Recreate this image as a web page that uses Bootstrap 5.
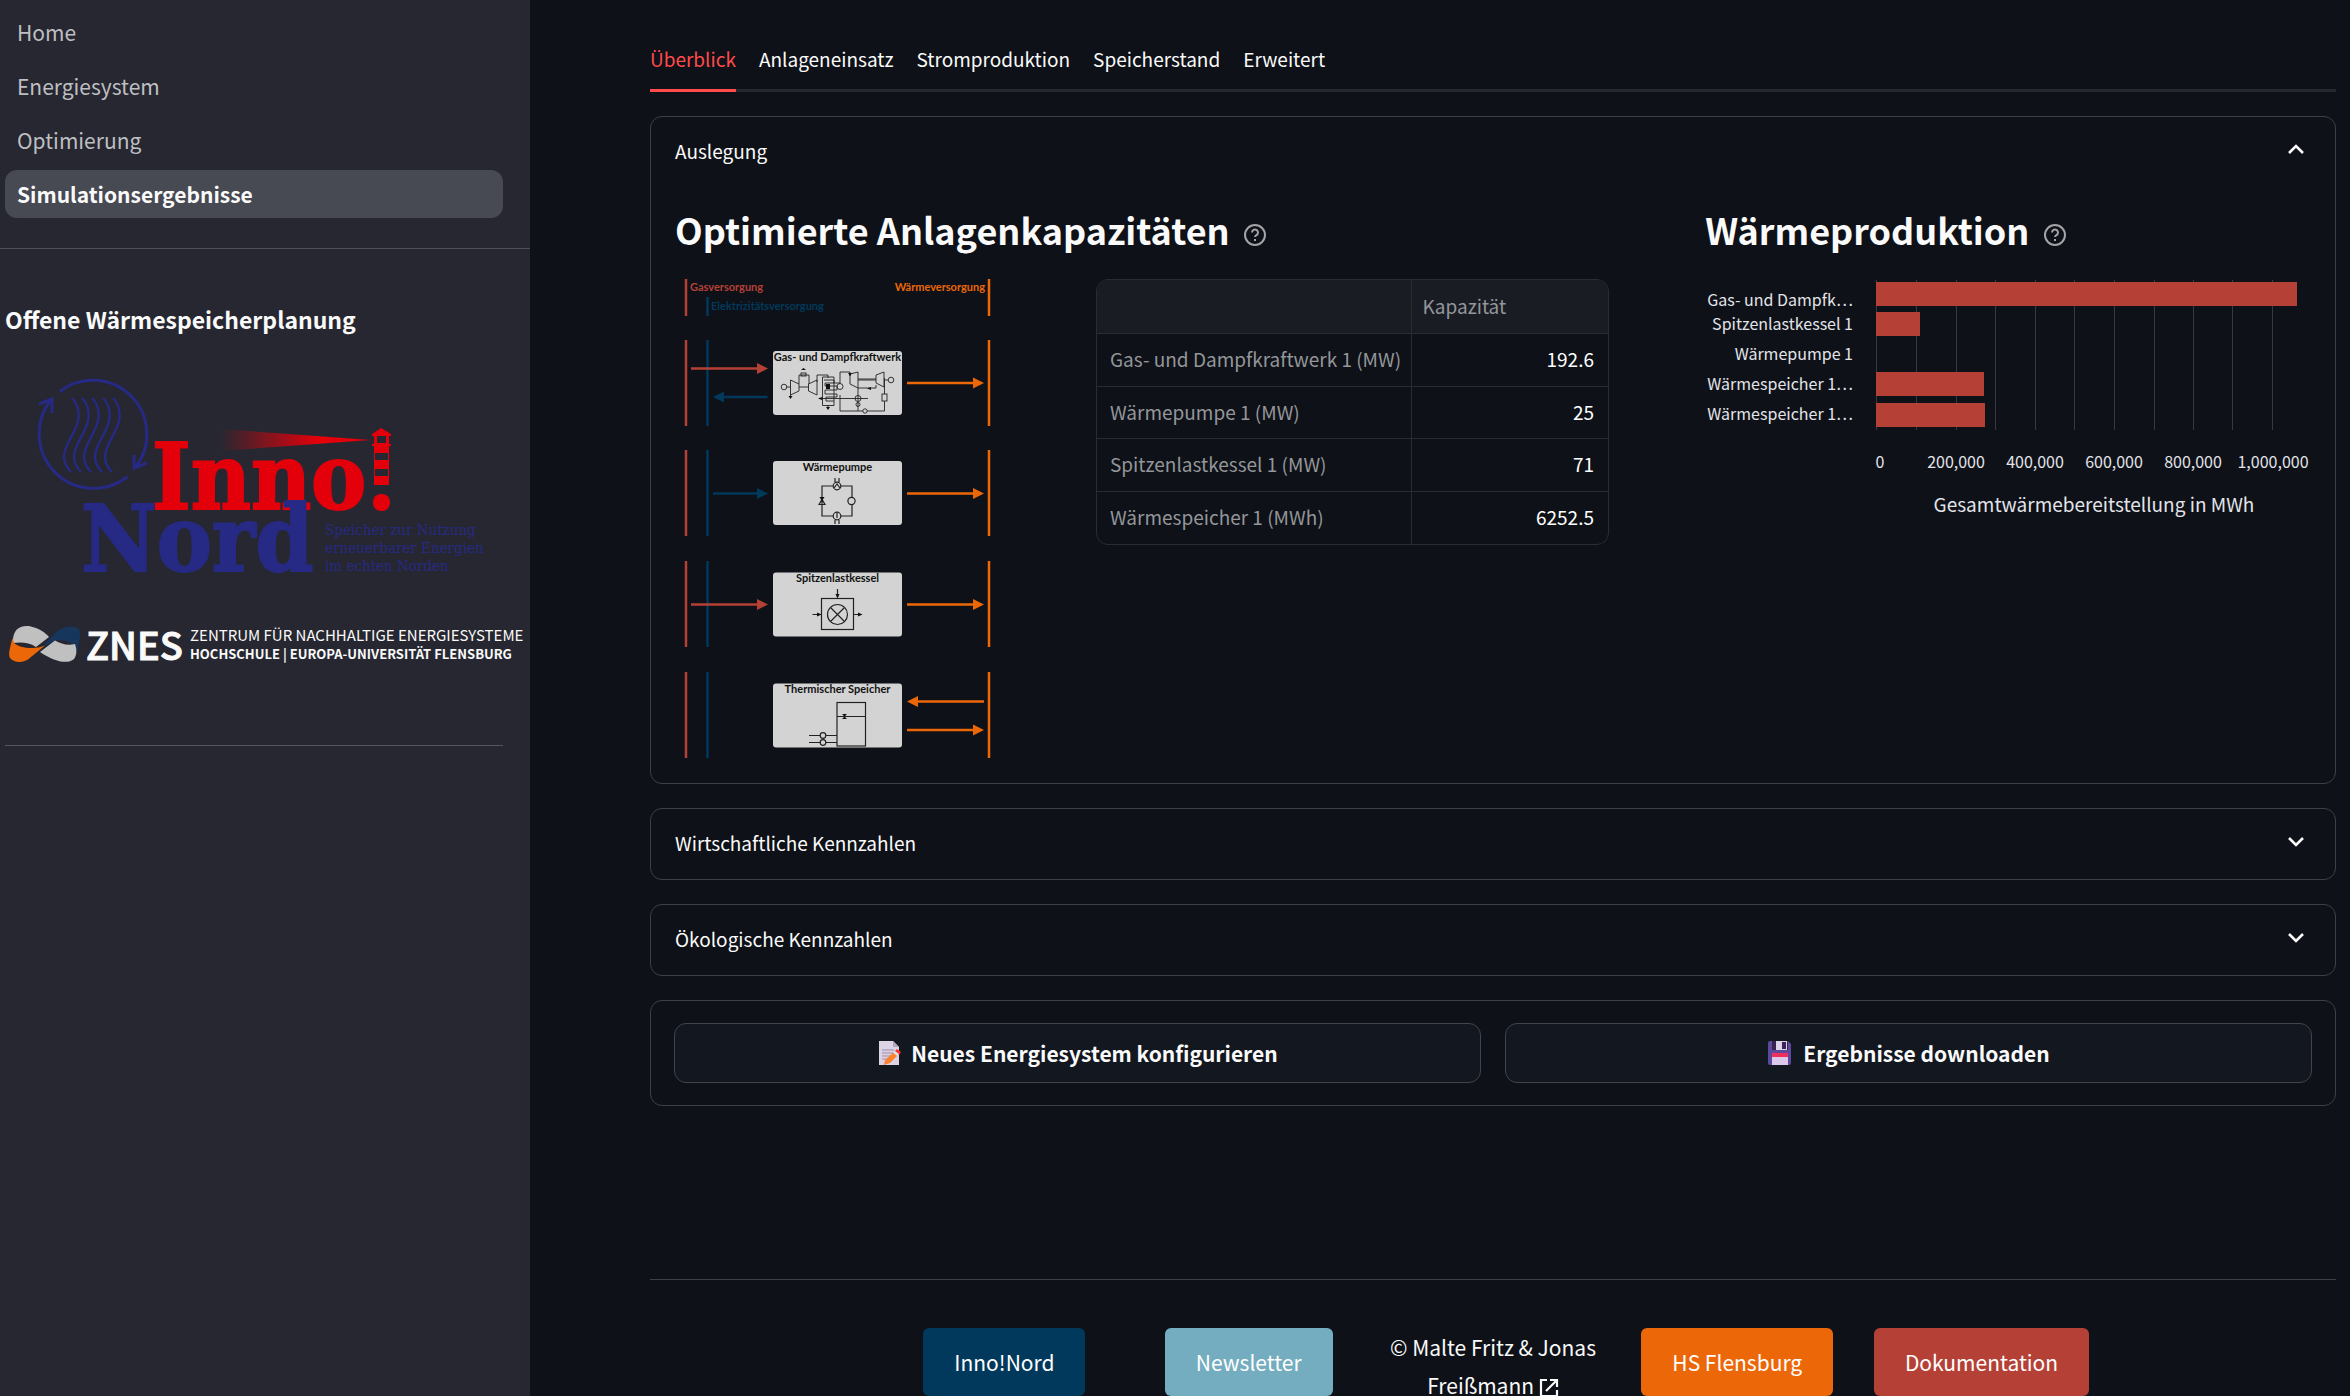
<!DOCTYPE html>
<html lang="de">
<head>
<meta charset="utf-8">
<meta name="viewport" content="width=device-width, initial-scale=1">
<title>Simulationsergebnisse</title>
<link href="https://cdn.jsdelivr.net/npm/bootstrap@5.3.0/dist/css/bootstrap.min.css" rel="stylesheet">
<style>
  body { background: #0e1117; color: #fafafa; font-family: "Noto Sans CJK SC", "Noto Sans", sans-serif; font-size: 19px; line-height: 30px; }
  a { color: inherit; text-decoration: none; }
  .side { width: 530px; background: #262730; }
  .side-nav { padding: 8px 27px 30px 5px; gap: 6px; border-bottom: 1px solid #4d4e56; }
  .side-nav .nav-link { color: #bebfc2; font-size: 21px; line-height: 48px; padding: 0 12px; border-radius: 12px; }
  .side-nav .nav-link.active { background: #474953; color: #fafafa; font-weight: 700; }
  .side-body { padding: 53px 27px 0 5px; }
  .side-body h2 { font-size: 23px; line-height: 34px; font-weight: 700; margin: 0 0 39px; }
  .side-body svg { display: block; overflow: visible; }
  .znes { margin-top: 33px; }
  .side-rule { border-top: 1px solid #54555c; margin-top: 71px; }
  .main { padding: 41px 14px 0 120px; overflow-y: auto; scrollbar-width: none; }
  .tabs { border-bottom: 3px solid #262730; gap: 23px; margin-bottom: 24px; }
  .tabs button { background: none; border: 0; border-bottom: 3px solid transparent; margin-bottom: -3px; padding: 3px 0 15px; color: #fafafa; line-height: 30px; }
  .tabs button.active { color: #ff4b4b; border-color: #ff4b4b; }
  .panel { background: none; border: 1px solid #3d4045; border-radius: 12px; margin-bottom: 24px; color: #fafafa; }
  .panel-head { background: none; border: 0; color: #fafafa; padding: 19px 24px 21px; line-height: 30px; }
  .panel-body { padding: 15px 24px 23px; }
  .panel h3 { font-size: 36px; line-height: 54px; font-weight: 700; margin: 0 0 20px; }
  .panel h3 svg { margin-left: 5px; }
  .col-caps { flex: 0 0 61.5%; min-width: 0; }
  .col-prod { flex: 1 1 0; min-width: 0; }
  .scheme { flex: 0 0 397px; }
  .scheme text { font-family: Lato, sans-serif; font-weight: 700; font-size: 11px; }
  .data { width: 513px; margin-top: 3px; border: 1px solid #2a2c32; border-radius: 12px; overflow: hidden; color: #94969a; }
  .data table { width: 100%; border-collapse: collapse; line-height: 29px; white-space: nowrap; }
  .data th, .data td { font-weight: 400; padding: 10px 14px 12px 13px; height: 53px; border-bottom: 1px solid #2a2c32; }
  .data tbody th { padding-right: 8px; }
  .data tbody tr:nth-child(even) > * { height: 52px; }
  .data thead th { background: #1a1c24; }
  .data tr > :first-child { width: 314px; border-right: 1px solid #2a2c32; }
  .data thead th + th { padding-left: 11px; }
  .data tbody tr:last-child > * { border-bottom: 0; height: 53px; }
  .data td { color: #fff; text-align: right; }
  .chart text { fill: #e2e4ea; font-size: 16px; }
  .chart .axis-title { font-size: 19px; }
  .actions { padding: 22px 23px; gap: 24px; }
  .action { flex: 1 1 0; gap: 10px; background: #131720; border: 1px solid #41444c; border-radius: 12px; height: 60px; color: #fafafa; font-size: 21px; font-weight: 700; }
  .foot { border-top: 1px solid #3d4045; margin-top: 173px; padding-top: 48px; gap: 24px; font-size: 21px; }
  .foot > * { flex: 1 1 0; min-width: 0; text-align: center; }
  .pill { display: inline-block; line-height: 68px; padding: 0 31px; border-radius: 6px; color: #fff; white-space: nowrap; }
  .credit { line-height: 38px; }
  .inno { background: #00395b; } .news { background: #74adc0; } .hsfl { background: #ec6707; } .docs { background: #b54036; }
</style>
</head>
<body>
<div class="d-flex vh-100 overflow-hidden">
  <aside class="side flex-shrink-0">
    <nav class="side-nav nav flex-column" aria-label="Seiten">
      <a class="nav-link" href="#">Home</a>
      <a class="nav-link" href="#">Energiesystem</a>
      <a class="nav-link" href="#">Optimierung</a>
      <a class="nav-link active" href="#" aria-current="page">Simulationsergebnisse</a>
    </nav>
    <div class="side-body">
      <h2>Offene Wärmespeicherplanung</h2>
      <!-- Inno!Nord -->
      <svg width="498" height="206" viewBox="0 0 498 206" role="img" aria-label="Inno!Nord">
        <defs><linearGradient id="beam"><stop offset="0" stop-color="#e3000b" stop-opacity="0"/><stop offset=".65" stop-color="#e3000b"/></linearGradient></defs>
        <g fill="none" stroke="#262a84" stroke-width="3">
          <path d="M54.600 16.700A54 54 0 0 1 130 93M122.400 101.700A54.500 54.500 0 0 1 46 25"/>
          <path d="M34 29L47 24V38M129 80V93L142 88"/>
          <g stroke-width="2.4"><path id="w" d="M67 23c8 8 8 20 4 29c-5 12-12 20-12 30c0 6 3 11 7 15"/><use href="#w" x="10"/><use href="#w" x="20"/><use href="#w" x="31"/><use href="#w" x="41"/></g>
        </g>
        <path d="M215 54L366 65L215 76z" fill="url(#beam)"/>
        <g font-family="'DejaVu Serif Condensed','DejaVu Serif',serif" font-weight="700" font-size="92" stroke-width="2">
          <text x="147" y="134" fill="#e3000b" stroke="#e3000b">Inno</text>
          <text x="76" y="196" fill="#262a84" stroke="#262a84">Nord</text>
        </g>
        <g fill="#e3000b">
          <path fill-rule="evenodd" d="M376 53l10 6v2h-2v8h2v2h-2v39h-15V71h-2v-2h2v-8h-2v-2zM372 61v7h9v-7zM370 78v7h13v-7zM370 94v7h13v-7z"/>
          <rect x="368" y="119" width="17" height="17" rx="8"/>
        </g>
        <g font-family="'DejaVu Serif Condensed','DejaVu Serif',serif" font-size="15" fill="#262a84">
          <text x="320" y="160">Speicher zur Nutzung</text>
          <text x="320" y="178">erneuerbarer Energien</text>
          <text x="320" y="196">im echten Norden</text>
        </g>
      </svg>
      <!-- ZNES -->
      <svg class="znes" width="512" height="60" viewBox="0 0 512 60" role="img" aria-label="ZNES">
        <path d="M8 27C8 16 14 11 24 12C34 14 41 19 44 23L31 33C24 28 15 28 8 29z" fill="#c0c0c0"/>
        <path d="M7.500 24C5 34 3 40 5 44C10 50 20 49 26 43L40 31.500C30 36 14 34 9 29z" fill="#ec6707"/>
        <path d="M38 32.500C49 20 54 13 65 12.500C73 12 76 16 75 22C74 30 73 34 72 38C70 31 66 26 52 26z" fill="#17365c"/>
        <path d="M35 38L50 26.500C56 30 63 32 70 30C72 36 72 41 69 45C62 51 48 47 35 38z" fill="#c0c0c0"/>
        <g fill="#fafafa">
          <text x="81" y="46" font-size="38" font-weight="500" stroke="#fafafa" stroke-width="1">ZNES</text>
          <text x="185" y="27" font-size="15">ZENTRUM FÜR NACHHALTIGE ENERGIESYSTEME</text>
          <text x="185" y="45" font-size="13" font-weight="700">HOCHSCHULE | EUROPA-UNIVERSITÄT FLENSBURG</text>
        </g>
      </svg>
      <div class="side-rule"></div>
    </div>
  </aside>

  <main class="main flex-grow-1">
    <div class="tabs d-flex" role="tablist">
      <button class="active" role="tab" aria-selected="true">Überblick</button>
      <button role="tab">Anlageneinsatz</button>
      <button role="tab">Stromproduktion</button>
      <button role="tab">Speicherstand</button>
      <button role="tab">Erweitert</button>
    </div>

    <section class="panel card">
      <button class="panel-head d-flex justify-content-between align-items-center" aria-expanded="true">Auslegung
        <svg width="32" height="26" viewBox="0 0 32 26" fill="none" stroke="#fafafa" stroke-width="2.6"><path d="M10 15l7-7l7 7"/></svg></button>
      <div class="panel-body d-flex gap-4">
        <div class="col-caps">
          <h3>Optimierte Anlagenkapazitäten <svg width="24" height="24" viewBox="0 0 24 24" fill="none" stroke="#a3a4a8" stroke-width="2"><circle cx="12" cy="12" r="10"/><path d="M9 9.500a3 3 0 1 1 4.500 2.600c-1 .6-1.500 1-1.500 2M12 16v2"/></svg></h3>
          <div class="d-flex gap-4 align-items-start">
            <div class="scheme">
              <svg width="330" height="484" viewBox="675 276 330 484" role="img" aria-label="Anlagenschema">
                <defs>
                  <g id="buses"><path d="M686 0v86" stroke="#b54036" stroke-width="2.500"/><path d="M707.500 0v86" stroke="#00395b" stroke-width="2.500"/><path d="M989 0v86" stroke="#ec6707" stroke-width="2.500"/></g>
                  <g id="toheat"><path d="M907 0h68" stroke="#ec6707" stroke-width="2.500"/><path d="M973-5.500l11 5.500l-11 5.500z" fill="#ec6707"/></g>
                  <g id="gasin"><path d="M691 0h68" stroke="#b54036" stroke-width="2.500"/><path d="M757-5.500l11 5.500l-11 5.500z" fill="#b54036"/></g>
                  <rect id="unit" x="773" width="129" height="64" rx="3" fill="#d3d3d3"/>
                </defs>
                <path d="M686 279v37" stroke="#b54036" stroke-width="2.500"/><path d="M707.500 297v19" stroke="#00395b" stroke-width="2.500"/><path d="M989 279v37" stroke="#ec6707" stroke-width="2.500"/>
                <text x="690" y="291" fill="#b54036">Gasversorgung</text>
                <text x="711" y="310" fill="#00395b">Elektrizitätsversorgung</text>
                <text x="985" y="291" fill="#ec6707" text-anchor="end">Wärmeversorgung</text>
                <use href="#buses" y="340"/><use href="#buses" y="450"/><use href="#buses" y="561"/><use href="#buses" y="672"/>
                <use href="#unit" y="351"/><use href="#unit" y="461"/><use href="#unit" y="572.500"/><use href="#unit" y="683.500"/>
                <use href="#gasin" y="368.500"/><use href="#gasin" y="604.500"/>
                <g stroke="#00395b" stroke-width="2.500"><path d="M767.500 397H722M713 493.500h46"/></g>
                <path d="M724 391.500l-11 5.500l11 5.500zM757 488l11 5.500l-11 5.500z" fill="#00395b"/>
                <use href="#toheat" y="383"/><use href="#toheat" y="493.500"/><use href="#toheat" y="604.500"/><use href="#toheat" y="730"/>
                <path d="M984 701.500h-68" stroke="#ec6707" stroke-width="2.500"/><path d="M918 696l-11 5.500l11 5.500z" fill="#ec6707"/>
                <g fill="#111" text-anchor="middle">
                  <text x="837.500" y="361">Gas- und Dampfkraftwerk</text><text x="837.500" y="471">Wärmepumpe</text><text x="837.500" y="582">Spitzenlastkessel</text><text x="837.500" y="693">Thermischer Speicher</text>
                </g>
                <g fill="none" stroke="#222" stroke-width=".9">
                  <!-- combined cycle plant -->
                  <circle cx="784" cy="387" r="2.800"/><path d="M787 387h4M790.500 380l8.500 4v7l-8.500 4zM799 387h9.500M817 380l-8.500 4v7l8.500 4zM790.500 395v3M799 384v-9h10v9M817 382v-7h11v3M822.500 377h11.500v28.500h-11.500zM828 405v4M834 383h6v-11h10v4M850 374l8 -2v16l-8-4zM858 379h18M858 380h18M876 375l8-3v15l-8-4zM884 380h4M858 388h18v-3M858 388v23M840 395v16h44.500v-33M820 398.500h48"/>
                  <circle cx="891" cy="380" r="2.800"/><circle cx="840" cy="386.500" r="3"/><circle cx="858" cy="398.500" r="3"/><circle cx="858" cy="404.500" r="2"/><circle cx="865" cy="411" r="2.200" fill="#d3d3d3"/><rect x="882" y="394" width="5" height="7" fill="#d3d3d3"/><rect x="801" y="373" width="5" height="3"/>
                  <path d="M824 380h10v3h-9v3h12v4h-12v4h12v3h-11v4h8"/>
                </g>
                <path d="M826 384h4v5h-4zM788.500 396h4l-2 3zM826 407h4l-2 3zM822 397l-4 1.500l4 1.500zM801 370h5l-2.500-2zM871 387l-4 1.500l4 1.500zM848 373h4l-2 3z" fill="#111"/>
                <!-- heat pump -->
                <g fill="none" stroke="#222" stroke-width="1.200"><path d="M833 486h-11v30h11M841 486h11v30h-11M819 504.500l3-5l3 5zM835 478v4M839 478v4M835 520v4M839 520v4M834 488l3-4l3 4M837 513v5"/><circle cx="837" cy="486" r="3.800"/><circle cx="837" cy="516" r="3.800"/><circle cx="851.500" cy="501" r="3.600" fill="#d3d3d3"/></g>
                <path d="M819.500 497h5l-2.500 4z" fill="#111"/>
                <!-- peak load boiler -->
                <g fill="none" stroke="#222" stroke-width="1.200"><rect x="821.500" y="598.500" width="32" height="31"/><circle cx="837.500" cy="614.500" r="10"/><path d="M830.500 607.500l14 14M844.500 607.500l-14 14M837.500 589v8M812.500 614.500h8M854 614.500h7"/></g>
                <path d="M835.500 594l2 4.500l2-4.500zM817 612.500l4.500 2l-4.500 2zM858 612.500l4.500 2l-4.500 2z" fill="#111"/>
                <!-- storage -->
                <g fill="none" stroke="#222" stroke-width="1.200"><rect x="837" y="702.500" width="28.500" height="43.500"/><path d="M837 716.500h28.500M809 735.500h28M809 742.500h28"/><circle cx="823" cy="735.500" r="2.800" fill="#d3d3d3"/><circle cx="823" cy="742.500" r="2.800" fill="#d3d3d3"/></g>
                <path d="M842 714h5l-5 5h5z" fill="#111"/>
              </svg>
            </div>
            <div class="data flex-shrink-0">
              <table>
                <thead><tr><th scope="col" aria-label="Anlage"></th><th scope="col">Kapazität</th></tr></thead>
                <tbody>
                  <tr><th scope="row">Gas- und Dampfkraftwerk 1 (MW)</th><td>192.6</td></tr>
                  <tr><th scope="row">Wärmepumpe 1 (MW)</th><td>25</td></tr>
                  <tr><th scope="row">Spitzenlastkessel 1 (MW)</th><td>71</td></tr>
                  <tr><th scope="row">Wärmespeicher 1 (MWh)</th><td>6252.5</td></tr>
                </tbody>
              </table>
            </div>
          </div>
        </div>
        <div class="col-prod">
          <h3>Wärmeproduktion <svg width="24" height="24" viewBox="0 0 24 24" fill="none" stroke="#a3a4a8" stroke-width="2"><circle cx="12" cy="12" r="10"/><path d="M9 9.500a3 3 0 1 1 4.500 2.600c-1 .6-1.500 1-1.500 2M12 16v2"/></svg></h3>
          <svg class="chart" width="606" height="250" viewBox="1705 276 606 250" role="img" aria-label="Wärmeproduktion in MWh">
            <path d="M1876.500 280v150M1916.500 280v150M1956.500 280v150M1995.500 280v150M2035.500 280v150M2074.500 280v150M2114.500 280v150M2154.500 280v150M2193.500 280v150M2232.500 280v150M2272.500 280v150" stroke="#363843"/>
            <g fill="#b54036"><rect x="1876" y="282" width="421" height="24"/><rect x="1876" y="312" width="44" height="24"/><rect x="1876" y="372" width="108" height="24"/><rect x="1876" y="403" width="109" height="24"/></g>
            <g text-anchor="end"><text x="1853" y="306">Gas- und Dampfk…</text><text x="1853" y="330">Spitzenlastkessel 1</text><text x="1853" y="360">Wärmepumpe 1</text><text x="1853" y="390">Wärmespeicher 1…</text><text x="1853" y="420">Wärmespeicher 1…</text></g>
            <g text-anchor="middle"><text x="1880" y="468">0</text><text x="1956" y="468">200,000</text><text x="2035" y="468">400,000</text><text x="2114" y="468">600,000</text><text x="2193" y="468">800,000</text><text x="2273" y="468">1,000,000</text><text class="axis-title" x="2094" y="512">Gesamtwärmebereitstellung in MWh</text></g>
          </svg>
        </div>
      </div>
    </section>

    <section class="panel card">
      <button class="panel-head d-flex justify-content-between align-items-center" aria-expanded="false">Wirtschaftliche Kennzahlen
        <svg width="32" height="26" viewBox="0 0 32 26" fill="none" stroke="#fafafa" stroke-width="2.6"><path d="M10 8l7 7l7-7"/></svg></button>
    </section>
    <section class="panel card">
      <button class="panel-head d-flex justify-content-between align-items-center" aria-expanded="false">Ökologische Kennzahlen
        <svg width="32" height="26" viewBox="0 0 32 26" fill="none" stroke="#fafafa" stroke-width="2.6"><path d="M10 8l7 7l7-7"/></svg></button>
    </section>
    <section class="panel card mb-0">
      <div class="actions d-flex">
        <button class="action d-flex align-items-center justify-content-center">
          <svg width="24" height="26" viewBox="0 0 24 26"><path d="M2 1h14l6 6v18H2z" fill="#dcd3e4"/><path d="M16 1v6h6z" fill="#b4a5c3"/><path d="M5 10h12M5 13h12M5 16h9M5 19h7" stroke="#9b8bab" stroke-width="1.200"/><path d="M7 25l1-5l10-9l4 3l-9 9z" fill="#ff822d"/><path d="M18 11l2-2l4 3l-2 3z" fill="#f8312f"/><path d="M16 12.500l2-1.500l4 3l-2 2z" fill="#d3e3f3"/></svg>
          Neues Energiesystem konfigurieren</button>
        <button class="action d-flex align-items-center justify-content-center">
          <svg width="26" height="26" viewBox="0 0 26 26"><path d="M3 1h18l3 3v19a2 2 0 0 1-2 2H3a2 2 0 0 1-2-2V3a2 2 0 0 1 2-2z" fill="#5b4a9c"/><path d="M5 1h16v9H5z" fill="#3b2254"/><path d="M9 1h11v9H9z" fill="#dcd3ea"/><path d="M15 2h4v7h-4z" fill="#3b2254"/><path d="M5 13h16v12H5z" fill="#dcc8ea"/><path d="M5 13h16v4H5z" fill="#f0305a"/></svg>
          Ergebnisse downloaden</button>
      </div>
    </section>

    <footer class="foot d-flex">
      <div></div>
      <div><a class="pill inno" href="#">Inno!Nord</a></div>
      <div><a class="pill news" href="#">Newsletter</a></div>
      <div class="credit">© Malte Fritz &amp; Jonas <a href="#" class="text-nowrap">Freißmann <svg width="20" height="20" viewBox="0 0 20 20" fill="none" stroke="#fafafa" stroke-width="2.200"><path d="M8 2H2v16h16v-6M11 2h7v7M18 2L7 13"/></svg></a></div>
      <div><a class="pill hsfl" href="#">HS Flensburg</a></div>
      <div><a class="pill docs" href="#">Dokumentation</a></div>
      <div></div>
    </footer>
  </main>
</div>
<script src="https://cdn.jsdelivr.net/npm/bootstrap@5.3.0/dist/js/bootstrap.bundle.min.js"></script>
</body>
</html>
